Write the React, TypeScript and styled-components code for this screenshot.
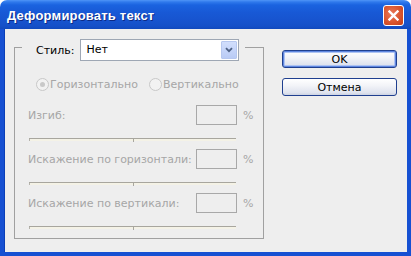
import React from 'react';
import styled, { createGlobalStyle } from 'styled-components';

const GlobalStyle = createGlobalStyle`
  html, body { margin: 0; padding: 0; background: #ffffff; }
  body { font-family: "DejaVu Sans", sans-serif; font-size: 11px; }
  #root { width: 411px; height: 256px; }
`;

const Window = styled.div`
  width: 411px;
  height: 256px;
  display: flex;
  flex-direction: column;
`;

const TitleBar = styled.div`
  height: 29px;
  flex: none;
  box-sizing: border-box;
  display: flex;
  align-items: center;
  justify-content: space-between;
  padding: 1px 7px 0 7px;
  border-radius: 7px 7px 0 0;
  background: linear-gradient(
    to bottom,
    #4f95f7 0px,
    #2f79ec 2px,
    #1a63e0 5px,
    #1859d6 12px,
    #1754cf 20px,
    #1550c8 26px,
    #1149bd 29px
  );
`;

const Title = styled.span`
  font-family: "Liberation Sans", Arial, sans-serif;
  font-weight: bold;
  font-size: 13px;
  color: #ffffff;
  text-shadow: 1px 1px 0 #0d2a85;
  letter-spacing: 0.2px;
`;

const CloseButton = styled.div`
  width: 21px;
  height: 21px;
  box-sizing: border-box;
  border: 1px solid #ffffff;
  border-radius: 3px;
  display: flex;
  align-items: center;
  justify-content: center;
  background: radial-gradient(circle at 40% 40%, #e9795a 0%, #d9552f 55%, #c23d17 100%);
`;

const Frame = styled.div`
  flex: 1;
  display: flex;
  align-items: flex-start;
  background: #eeeeee;
  border: 4px solid #1650d2;
  border-top: 0;
  padding: 10px 10px 0 10px;
  box-shadow: inset 1px 0 0 #0b3fb8;
`;

const Group = styled.div`
  width: 250px;
  flex: none;
  display: flex;
  flex-direction: column;
`;

const GroupHeader = styled.div`
  display: flex;
  height: 22px;
`;

const HeaderLine = styled.div<{ $side: 'left' | 'right' }>`
  margin-top: 8px;
  border-top: 1px solid #a0a0a0;
  ${(p) => (p.$side === 'left' ? 'width: 7px; border-left: 1px solid #a0a0a0;' : 'flex: 1; margin-left: 6px; border-right: 1px solid #a0a0a0;')}
`;

const StyleLabel = styled.span`
  margin-left: 14px;
  line-height: 22px;
  color: #000000;
  padding-top: 1px;
`;

const Select = styled.div`
  margin-left: 6px;
  width: 159px;
  height: 22px;
  box-sizing: border-box;
  border: 1px solid #9ea7b4;
  background: #ffffff;
  display: flex;
  align-items: stretch;
`;

const SelectValue = styled.span`
  flex: 1;
  padding-left: 5px;
  line-height: 20px;
  color: #000000;
`;

const SelectArrow = styled.div`
  width: 16px;
  margin: 1px;
  box-sizing: border-box;
  border: 1px solid #b6c7ef;
  border-radius: 1px;
  background: linear-gradient(to bottom, #d1defc, #b9cbf5);
  display: flex;
  align-items: center;
  justify-content: center;
`;

const GroupBody = styled.div`
  border: 1px solid #a0a0a0;
  border-top: 0;
  padding: 15px 11px 9px 13px;
  display: flex;
  flex-direction: column;
`;

const RadioRow = styled.div`
  display: flex;
  align-items: center;
  height: 16px;
  padding-left: 8px;
  gap: 11px;
`;

const RadioOption = styled.span`
  display: flex;
  align-items: center;
  gap: 1px;
  color: #a6a6a6;
`;

const RadioCircle = styled.span<{ $checked?: boolean }>`
  width: 13px;
  height: 13px;
  box-sizing: border-box;
  border-radius: 50%;
  border: 1px solid #c8c8c8;
  background: #f2f2f2;
  display: flex;
  align-items: center;
  justify-content: center;
  &::after {
    content: '';
    width: 5px;
    height: 5px;
    border-radius: 50%;
    background: ${(p) => (p.$checked ? '#c9c9c9' : 'transparent')};
  }
`;

const FieldRow = styled.div<{ $first?: boolean }>`
  display: flex;
  align-items: center;
  height: 20px;
  margin-top: ${(p) => (p.$first ? '13px' : '8px')};
`;

const FieldLabel = styled.span`
  flex: 1;
  color: #a6a6a6;
`;

const NumberBox = styled.div`
  width: 41px;
  height: 20px;
  box-sizing: border-box;
  border: 1px solid #a8a8a8;
`;

const Percent = styled.span`
  width: 15px;
  padding-left: 6px;
  box-sizing: border-box;
  color: #a6a6a6;
`;

const Slider = styled.div`
  position: relative;
  margin: 13px 0 0 1px;
  width: 207px;
  height: 2px;
  border-top: 1px solid #a8a69e;
  background: #f4f2e6;
  &::before {
    content: '';
    position: absolute;
    left: 0;
    top: 0;
    width: 1px;
    height: 2px;
    background: #b5b3ab;
  }
  &::after {
    content: '';
    position: absolute;
    left: 104px;
    top: 0;
    width: 1px;
    height: 3px;
    background: #a8a69e;
  }
`;

const Buttons = styled.div`
  margin: 11px 0 0 18px;
  display: flex;
  flex-direction: column;
  gap: 10px;
`;

const Button = styled.div<{ $default?: boolean }>`
  width: 115px;
  height: 18px;
  box-sizing: border-box;
  border: 1px solid #1f3f8f;
  border-radius: 3px;
  display: flex;
  align-items: center;
  justify-content: center;
  color: #000000;
  background: linear-gradient(to bottom, #ffffff 0%, #f3f4f8 40%, #dfe3ee 85%, #cdd3e2 100%);
  box-shadow: ${(p) => (p.$default ? 'inset 0 0 0 1px #5e86e0, inset 0 0 0 2px #aec3f2' : 'none')};
`;

export default function App() {
  return (
    <>
      <GlobalStyle />
      <Window>
        <TitleBar>
          <Title>Деформировать текст</Title>
          <CloseButton>
            <svg width="11" height="11" viewBox="0 0 11 11">
              <path d="M1.5 1.5 L9.5 9.5 M9.5 1.5 L1.5 9.5" stroke="#ffffff" strokeWidth="2.4" strokeLinecap="square" />
            </svg>
          </CloseButton>
        </TitleBar>
        <Frame>
          <Group>
            <GroupHeader>
              <HeaderLine $side="left" />
              <StyleLabel>Стиль:</StyleLabel>
              <Select>
                <SelectValue>Нет</SelectValue>
                <SelectArrow>
                  <svg width="8" height="6" viewBox="0 0 8 6">
                    <path d="M1 1.2 L4 4.2 L7 1.2" stroke="#4d6185" strokeWidth="1.8" fill="none" />
                  </svg>
                </SelectArrow>
              </Select>
              <HeaderLine $side="right" />
            </GroupHeader>
            <GroupBody>
              <RadioRow>
                <RadioOption>
                  <RadioCircle $checked />
                  Горизонтально
                </RadioOption>
                <RadioOption>
                  <RadioCircle />
                  Вертикально
                </RadioOption>
              </RadioRow>
              <FieldRow $first>
                <FieldLabel>Изгиб:</FieldLabel>
                <NumberBox />
                <Percent>%</Percent>
              </FieldRow>
              <Slider />
              <FieldRow>
                <FieldLabel>Искажение по горизонтали:</FieldLabel>
                <NumberBox />
                <Percent>%</Percent>
              </FieldRow>
              <Slider />
              <FieldRow>
                <FieldLabel>Искажение по вертикали:</FieldLabel>
                <NumberBox />
                <Percent>%</Percent>
              </FieldRow>
              <Slider />
            </GroupBody>
          </Group>
          <Buttons>
            <Button $default>OK</Button>
            <Button>Отмена</Button>
          </Buttons>
        </Frame>
      </Window>
    </>
  );
}
